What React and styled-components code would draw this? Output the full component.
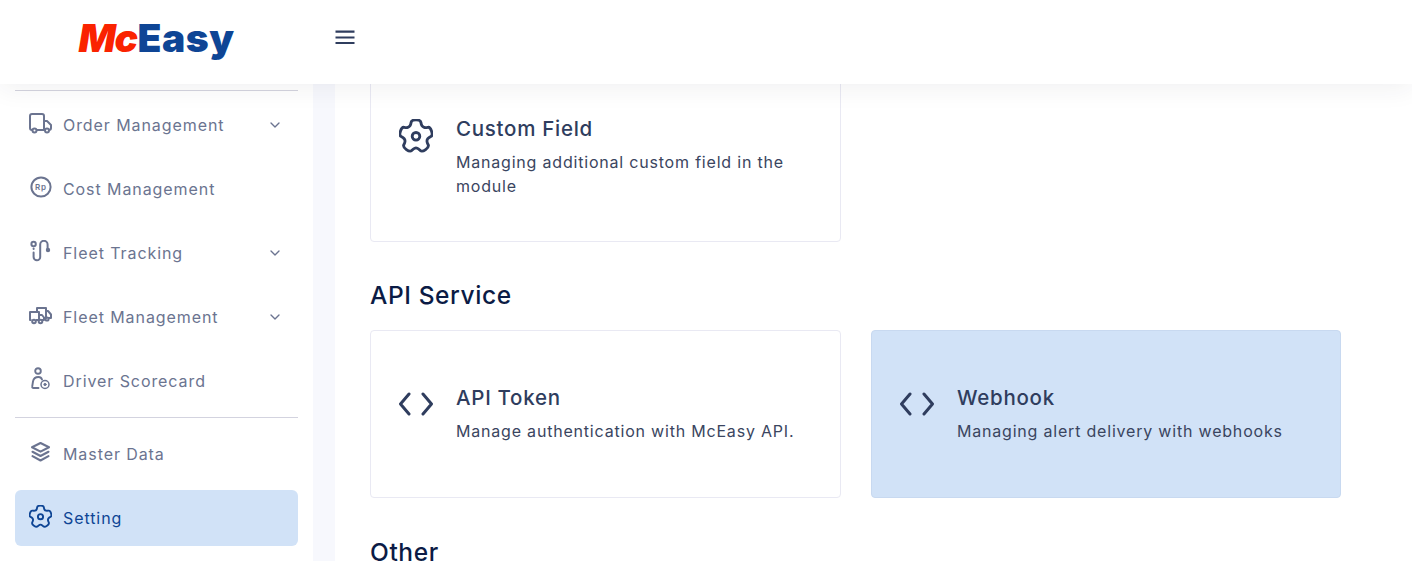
import React from 'react'
import styled, { createGlobalStyle } from 'styled-components'
import { ChevronDown } from 'lucide-react'

const GlobalStyle = createGlobalStyle`
  * { box-sizing: border-box; }
  html, body { margin: 0; padding: 0; height: 100%; overflow: hidden; background: #ffffff; }
  body { font-family: Inter, "Noto Sans", sans-serif; }
`
const Page = styled.div`
  height: 561px;
  overflow: hidden;
`
const Header = styled.header`
  position: relative;
  z-index: 2;
  height: 84px;
  display: flex;
  align-items: center;
  background: #ffffff;
  box-shadow: 0 4px 24px rgba(40, 40, 60, 0.07);
`
const LogoBox = styled.div`
  width: 313px;
  display: flex;
  justify-content: center;
  padding-bottom: 8px;
`
const Logo = styled.div`
  font-size: 39px;
  line-height: 44px;
  font-weight: 900;
  font-style: italic;
  letter-spacing: -1.4px;
  color: #fa2300;
  span { color: #0e4595; font-style: normal; letter-spacing: 0.5px; margin-left: 1px; }
`
const MenuButton = styled.button`
  margin-left: 20px;
  margin-bottom: 10px;
  padding: 0;
  border: 0;
  background: none;
  display: flex;
  color: #2f3d5e;
`
const Body = styled.div`
  display: flex;
  height: 477px;
`
const Sidebar = styled.nav`
  width: 313px;
  flex-shrink: 0;
  padding: 6px 15px 0;
  background: #ffffff;
`
const Divider = styled.div`
  height: 1px;
  background: #d3d3df;
  margin-bottom: 6px;
  ${p => p.$lower && 'margin: 8px 0;'}
`
const NavRow = styled.div`
  height: 56px;
  margin-bottom: 8px;
  padding: 0 15px;
  display: flex;
  align-items: center;
  gap: 12px;
  border-radius: 6px;
  font-size: 16px;
  letter-spacing: 0.92px;
  color: ${p => (p.$active ? '#0e4595' : '#6b7490')};
  background: ${p => (p.$active ? '#d1e2f7' : 'transparent')};
`
const NavIcon = styled.span`
  width: 21px;
  height: 24px;
  display: flex;
  align-items: center;
  justify-content: center;
  flex-shrink: 0;
  margin-top: -4px;
  svg { flex-shrink: 0; }
`
const NavLabel = styled.span`
  flex: 1;
`
const Gutter = styled.div`
  width: 22px;
  flex-shrink: 0;
  background: #f7f8fd;
`
const Main = styled.main`
  flex: 1;
  padding: 0 35px;
  background: #ffffff;
`
const CardGrid = styled.div`
  display: grid;
  grid-template-columns: 471px 470px;
  gap: 30px;
  margin-top: ${p => (p.$scrolled ? '-10px' : '0')};
`
const Card = styled.div`
  height: 168px;
  padding: 0 28px;
  display: flex;
  align-items: center;
  gap: 23px;
  border-radius: 4px;
  border: 1px solid ${p => (p.$active ? '#c8d9f0' : '#e9e9f3')};
  background: ${p => (p.$active ? '#d1e2f7' : '#ffffff')};
`
const CardIcon = styled.div`
  width: 34px;
  height: 34px;
  flex-shrink: 0;
  align-self: flex-start;
  margin-top: ${p => p.$top}px;
  color: #2f3d5e;
`
const CardText = styled.div`
  align-self: flex-start;
  margin-top: ${p => p.$top}px;
  width: 345px;
`
const CardTitle = styled.div`
  font-size: 20.5px;
  line-height: 26px;
  font-weight: 500;
  letter-spacing: 0.72px;
  color: #2f3d5e;
`
const CardDesc = styled.div`
  margin-top: 8px;
  font-size: 16px;
  line-height: 24px;
  letter-spacing: 0.8px;
  color: #3a4560;
`
const SectionTitle = styled.h2`
  margin: ${p => (p.$last ? '38px' : '37px')} 0 19px;
  font-size: 24.5px;
  line-height: 32px;
  font-weight: 500;
  letter-spacing: 0.6px;
  color: #0b1b45;
`

// five lobed cog, lobes with a flat top and a hollow between them
const gearPath = (() => {
  const step = (2 * Math.PI) / 5
  const pts = []
  for (let i = 0; i < 5; i++) {
    const a = -Math.PI / 2 + i * step
    pts.push([a - 0.27, 12], [a + 0.27, 12], [a + 0.42, 9], [a + step / 2, 8.1], [a + step - 0.42, 9])
  }
  const p = pts.map(([t, r]) => [12 + r * Math.cos(t), 12.2 + r * Math.sin(t)])
  const mid = (a, b) => [(a[0] + b[0]) / 2, (a[1] + b[1]) / 2]
  const start = mid(p[p.length - 1], p[0])
  let d = `M${start[0].toFixed(2)} ${start[1].toFixed(2)}`
  p.forEach((c, i) => {
    const m = mid(c, p[(i + 1) % p.length])
    d += `Q${c[0].toFixed(2)} ${c[1].toFixed(2)} ${m[0].toFixed(2)} ${m[1].toFixed(2)}`
  })
  return d + 'Z'
})()

const GearIcon = ({ size }) => (
  <svg width={size} height={size} viewBox="0 0 24 24" fill="none" stroke="currentColor" strokeWidth="2" strokeLinejoin="round">
    <path d={gearPath} />
    <circle cx="12" cy="12.2" r="2.7" />
  </svg>
)

const CodeIcon = () => (
  <svg width="34" height="34" viewBox="0 0 34 34" fill="none" stroke="currentColor" strokeWidth="3" strokeLinecap="round" strokeLinejoin="round">
    <path d="M10 7 L1.5 17 L10 27" />
    <path d="M24 7 L32.5 17 L24 27" />
  </svg>
)

const MenuIcon = () => (
  <svg width="24" height="24" viewBox="0 0 24 24" fill="none" stroke="currentColor" strokeWidth="2.2">
    <path d="M2.5 6.7 H21.5 M2.5 12.5 H21.5 M2.5 18 H21.5" />
  </svg>
)

const TruckIcon = () => (
  <svg width="23" height="21" viewBox="0 0 23 21" fill="none" stroke="currentColor" strokeWidth="2" strokeLinejoin="round">
    <path d="M3.5 17 H3 a2 2 0 0 1 -2 -2 V3 a2 2 0 0 1 2 -2 H13 a2 2 0 0 1 2 2 V17 H7.5" />
    <path d="M15 8 H18 L22 12 V15 a2 2 0 0 1 -2 2 M16 17 H15" />
    <circle cx="5.5" cy="17.5" r="2" />
    <circle cx="18" cy="17.5" r="2" />
  </svg>
)

const RpIcon = () => (
  <svg width="22" height="22" viewBox="0 0 22 22">
    <circle cx="11" cy="11" r="9.6" fill="none" stroke="currentColor" strokeWidth="2" />
    <text x="11" y="14" textAnchor="middle" fontSize="8" fontWeight="600" fontFamily="Inter, sans-serif" fill="currentColor">Rp</text>
  </svg>
)

const RouteIcon = () => (
  <svg width="21" height="22" viewBox="0 0 21 22" fill="none" stroke="currentColor" strokeWidth="2" strokeLinecap="round">
    <circle cx="3.6" cy="4" r="2.2" />
    <path d="M3.6 8.5 V9" />
    <path d="M3.6 12.5 V17 a3.3 3.3 0 0 0 6.6 0 V4.5 a3.7 3.7 0 0 1 7.4 0 V9" />
    <circle cx="18" cy="10" r="1.2" fill="currentColor" />
  </svg>
)

const FleetIcon = () => (
  <svg width="23" height="19" viewBox="0 0 23 19" fill="none" stroke="currentColor" strokeWidth="2" strokeLinejoin="round">
    <path d="M2.5 14 H1 V6 H10 V14 H7" />
    <path d="M10 9 H13 L15 11.5 V14 H13" />
    <path d="M8 6 V2 H17 V12 H15" />
    <path d="M17 5 H19 L22 8.5 V12 H19" />
    <circle cx="5" cy="15.5" r="1.8" />
    <circle cx="11.5" cy="15.5" r="1.8" />
    <circle cx="18" cy="13" r="1.6" />
  </svg>
)

const DriverIcon = () => (
  <svg width="21" height="24" viewBox="0 0 21 24" fill="none" stroke="currentColor" strokeWidth="1.9" strokeLinecap="round">
    <circle cx="8" cy="4" r="2.8" />
    <path d="M8.5 21 H3.5 C2.5 21 2 20.5 2.2 19.5 L3 14.5 C3.5 11.5 5.5 10 8.5 10 C10.5 10 11.5 11 12 12.5" />
    <circle cx="15" cy="17.5" r="4" strokeWidth="1.5" />
    <circle cx="15" cy="17.5" r="1.2" fill="currentColor" strokeWidth="0.8" />
  </svg>
)

const LayersIcon = () => (
  <svg width="21" height="22" viewBox="0 0 21 22" fill="none" stroke="currentColor" strokeWidth="2.1" strokeLinejoin="round" strokeLinecap="round">
    <path d="M10.5 2 L19 6.3 L10.5 10.6 L2 6.3 Z" />
    <path d="M2.5 10.8 L10.5 15 L18.5 10.8" />
    <path d="M2.5 15.2 L10.5 19.5 L18.5 15.2" />
  </svg>
)

const navTop = [
  { label: 'Order Management', icon: <TruckIcon />, more: true },
  { label: 'Cost Management', icon: <RpIcon /> },
  { label: 'Fleet Tracking', icon: <RouteIcon />, more: true },
  { label: 'Fleet Management', icon: <FleetIcon />, more: true },
  { label: 'Driver Scorecard', icon: <DriverIcon /> },
]

const Nav = ({ item, active }) => (
  <NavRow $active={active}>
    <NavIcon>{item.icon}</NavIcon>
    <NavLabel>{item.label}</NavLabel>
    {item.more && <ChevronDown size={16} strokeWidth={2} />}
  </NavRow>
)

const App = () => {
  return (
    <Page>
      <GlobalStyle />
      <Header>
        <LogoBox>
          <Logo>Mc<span>Easy</span></Logo>
        </LogoBox>
        <MenuButton aria-label="Menu"><MenuIcon /></MenuButton>
      </Header>
      <Body>
        <Sidebar>
          <Divider />
          {navTop.map(item => <Nav key={item.label} item={item} />)}
          <Divider $lower />
          <Nav item={{ label: 'Master Data', icon: <LayersIcon /> }} />
          <Nav item={{ label: 'Setting', icon: <GearIcon size={23} /> }} active />
        </Sidebar>
        <Gutter />
        <Main>
          <CardGrid $scrolled>
            <Card>
              <CardIcon $top={44}><GearIcon size={34} /></CardIcon>
              <CardText $top={41}>
                <CardTitle>Custom Field</CardTitle>
                <CardDesc>Managing additional custom field in the module</CardDesc>
              </CardText>
            </Card>
          </CardGrid>
          <SectionTitle>API Service</SectionTitle>
          <CardGrid>
            <Card>
              <CardIcon $top={56}><CodeIcon /></CardIcon>
              <CardText $top={54}>
                <CardTitle>API Token</CardTitle>
                <CardDesc>Manage authentication with McEasy API.</CardDesc>
              </CardText>
            </Card>
            <Card $active>
              <CardIcon $top={56}><CodeIcon /></CardIcon>
              <CardText $top={54}>
                <CardTitle>Webhook</CardTitle>
                <CardDesc>Managing alert delivery with webhooks</CardDesc>
              </CardText>
            </Card>
          </CardGrid>
          <SectionTitle $last>Other</SectionTitle>
        </Main>
      </Body>
    </Page>
  )
}

export default App
